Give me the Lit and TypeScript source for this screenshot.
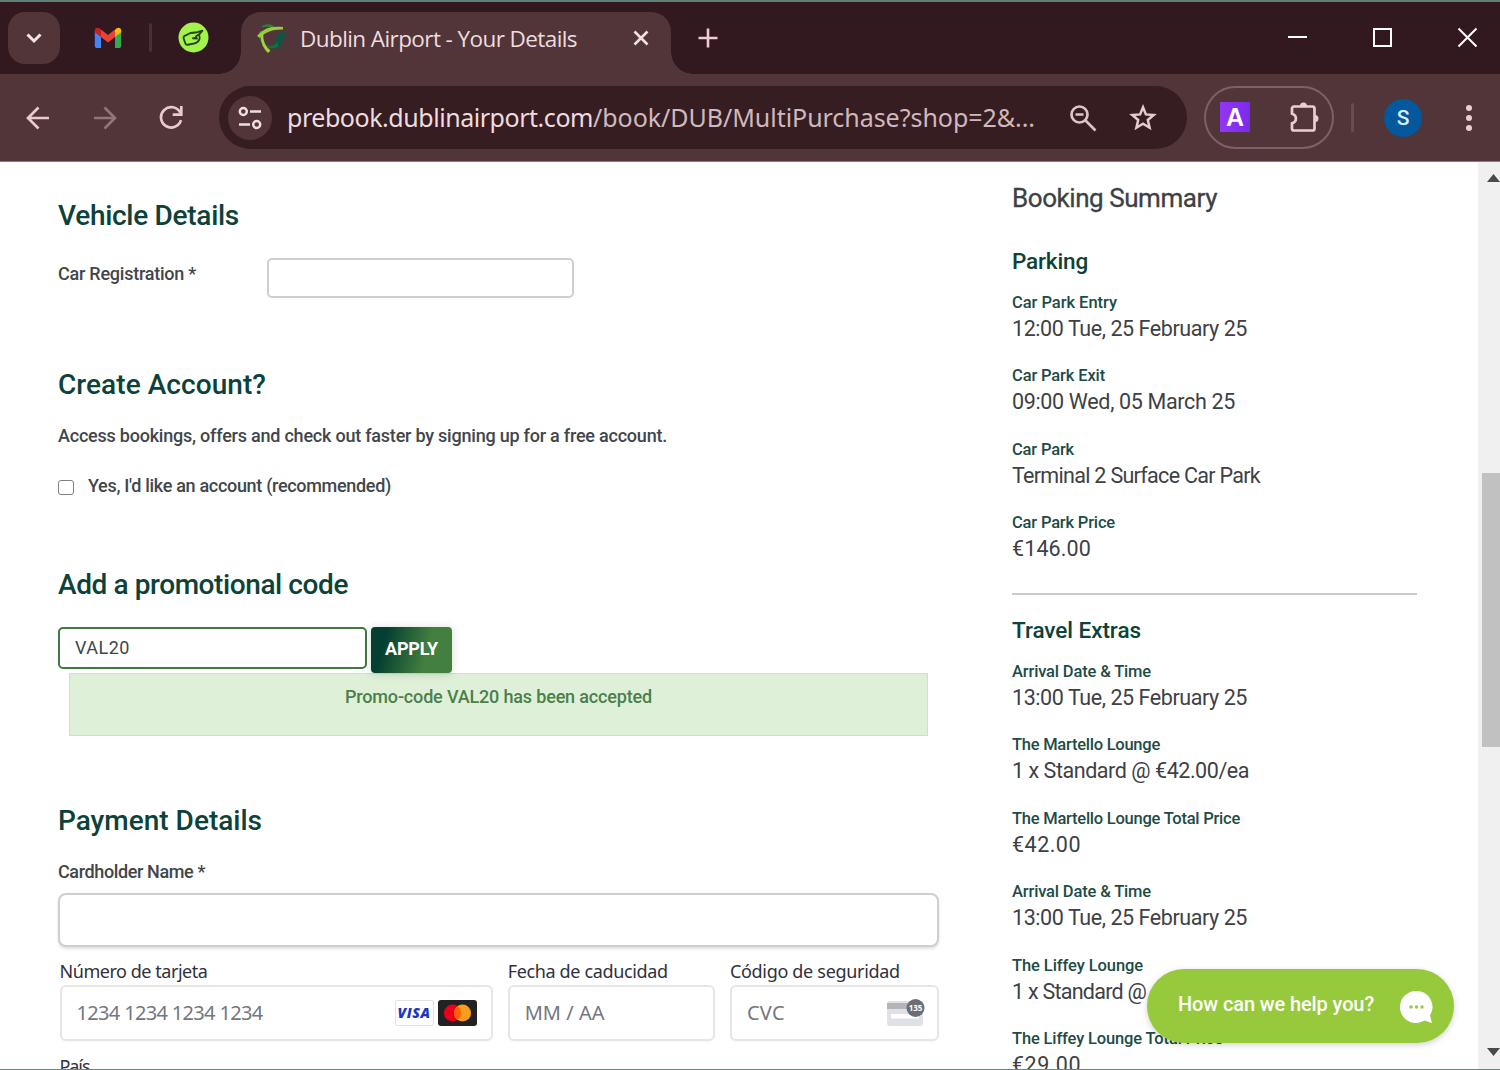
import { LitElement, html, css, svg } from "lit";
import { customElement, property, state } from "lit/decorators.js";

/** A single line of text whose tracking is set so that it spans a given width. */
@customElement("text-run")
class TextRun extends LitElement {
  static styles = css`
    :host { display: inline-block; white-space: pre; }
  `;
  @property() text = "";
  @property({ type: Number }) span = 0;
  @state() tracking = 0;

  firstUpdated() {
    const el = this.renderRoot.querySelector("span");
    if (!el || !this.span) return;
    this.tracking = (this.span - el.getBoundingClientRect().width) / this.text.length;
  }

  render() {
    return html`<span style="letter-spacing:${this.tracking}px">${this.text}</span>`;
  }
}

const run = (text: string, span: number) => html`<text-run .text=${text} .span=${span}></text-run>`;

@customElement("browser-chrome")
class BrowserChrome extends LitElement {
  static styles = css`
    :host { display: block; font-family: "Noto Sans", "Open Sans", sans-serif; color: #eedcdf; }
    svg { display: block; flex: none; }
    .strip { box-sizing: border-box; height: 74px; border-top: 2px solid #5f8076; background: #31191f; display: flex; align-items: flex-start; padding-left: 8px; }
    .search { width: 52px; height: 52px; border-radius: 17px; background: #513539; margin-top: 10px; display: grid; place-items: center; }
    .gmail { margin: 25px 0 0 34px; }
    .sep { width: 3px; height: 29px; margin: 21px 0 0 27px; background: #4b2f34; border-radius: 2px; }
    .up { margin: 20px 0 0 26px; }
    .flare { width: 22px; height: 22px; align-self: flex-end; }
    .flare.l { margin-left: 10px; background: radial-gradient(circle at 0 0, transparent 21.5px, #513539 22px); }
    .flare.r { background: radial-gradient(circle at 100% 0, transparent 21.5px, #513539 22px); }
    .tab { box-sizing: border-box; width: 430px; height: 62px; margin-top: 10px; border-radius: 20px 20px 0 0; background: #513539; display: flex; align-items: center; padding: 0 22px 10px 15px; font-family: "Open Sans", "Noto Sans", sans-serif; font-size: 22.500px; line-height: 30px; }
    .tab .title { margin: 1px 0 0 13px; flex: 1; }
    .plus { margin: 26px 0 0 5px; }
    .win { display: flex; margin: 25px 22px 0 auto; gap: 64px; }
    .bar { box-sizing: border-box; height: 88px; background: #513539; border-bottom: 1px solid #8d7a7d; display: flex; align-items: center; padding-left: 26px; }
    .fwd { margin-left: 43px; }
    .reload { margin-left: 42px; }
    .omni { box-sizing: border-box; width: 968px; height: 63px; border-radius: 32px; background: #361d22; margin-left: 35px; display: flex; align-items: center; padding: 0 29px 0 9px; font-size: 25px; line-height: 32px; }
    .info { width: 44px; height: 44px; border-radius: 50%; background: #513539; display: grid; place-items: center; }
    .url { margin-left: 15px; display: flex; flex: 1; margin-top: -1px; }
    .path { color: #cfb9bd; }
    .star { margin-left: 31px; }
    .ext { box-sizing: border-box; width: 130px; height: 63px; border: 2px solid #7b6265; border-radius: 32px; margin-left: 17px; display: flex; align-items: center; justify-content: space-between; padding: 0 11px 0 14px; }
    .a { width: 30px; height: 30px; margin-top: -1px; background: linear-gradient(90deg, #9436f5, #7a2bee); color: #fff; font: 700 25px/31px "Liberation Sans", sans-serif; text-align: center; }
    .vsep { width: 3px; height: 29px; margin-left: 17px; background: #6a4b50; border-radius: 2px; }
    .avatar { width: 38px; height: 38px; border-radius: 50%; margin-left: 30px; background: #04589d; color: #dcebf7; font: 500 21px/38px Roboto, sans-serif; text-align: center; }
    .menu { margin-left: 43px; }
  `;

  render() {
    return html`
      <div class="strip">
        <div class="search"><svg width="18" height="12" viewBox="0 0 18 12"><path d="M2.5 2.5 9 9l6.500-6.500" fill="none" stroke="#f6e4e7" stroke-width="3"/></svg></div>
        <svg class="gmail" width="28" height="22" viewBox="0 0 28 22">
          <path d="M.8 4v15a2 2 0 0 0 2 2h4.200V9z" fill="#4285f4"/>
          <path d="M27.200 4v15a2 2 0 0 1-2 2H21V9z" fill="#34a853"/>
          <path d="M21 3v7l6.200-4.800V3.400C27.200 1 24.500-.2 22.600 1.300z" fill="#fbbc04"/>
          <path d="M7 10V2.600l7 5.300 7-5.300V10l-7 5.400z" fill="#ea4335"/>
          <path d="M.8 3.400v1.800L7 10V2.600L5.400 1.300C3.500-.2.8 1 .8 3.400z" fill="#c5221f"/>
        </svg>
        <div class="sep"></div>
        <svg class="up" width="31" height="31" viewBox="0 0 31 31">
          <circle cx="15.500" cy="15.500" r="15" fill="#a3f34c"/>
          <path d="M12.500 11 6.200 14.200c-.8.500-.9 1.200-.6 2l1.700 5c.4 1.200 1.200 1.700 2.500 1.500l6.200-1.200c2.600-.6 5-2.500 5.600-5 .3-1.400 0-2.600-.8-3.700l3.600-4.200-5 1.600-6.900.8zM12.500 11l3.800-.3M15 16.200c1.700.4 3-.4 3.400-2.200l2.400-1.500M15 16.200l4 .3" fill="none" stroke="#24480f" stroke-width="1.900" stroke-linejoin="round" stroke-linecap="round"/>
        </svg>
        <div class="flare l"></div>
        <div class="tab">
          <svg width="31" height="31" viewBox="0 0 31 31">
            <path d="M6 3c5-2.500 9-2.500 13 1l-2 1.500C13 3.500 10 3.500 6 4.500z" fill="#2f7f3b"/>
            <path d="M4 8c-2 3-2 6 0 9l4 6 1.500-2L6 15c-1-3 0-5 1-7z" fill="#2b7d3d"/>
            <path d="M1 13C7 5.500 15 2.500 27 4v2.500C17 6 9 9 4 15z" fill="#9acb3b"/>
            <path d="M7.500 10c-1 7 1.500 13 7 17.500L12 30C6 24 4 17 5.500 11z" fill="#a5d23c"/>
            <path d="M21 11l8.500-2.500C29 16 26 22 21 26.500l-5-4.500c4-2.500 5-6 5-11z" fill="#0c5646"/>
            <path d="M11 22c4 1.500 8 .5 10.500-3l1 4c-3 3-7 3-11 1.500z" fill="#1a6a3f"/>
          </svg>
          <div class="title">${run("Dublin Airport - Your Details", 277)}</div>
          <svg width="16" height="16" viewBox="0 0 16 16"><path d="M1.500 1.500l13 13m0-13l-13 13" stroke="#f2dfe2" stroke-width="2.600"/></svg>
        </div>
        <div class="flare r"></div>
        <svg class="plus" width="20" height="20" viewBox="0 0 20 20"><path d="M10 .5v19M.5 10h19" stroke="#edcdd3" stroke-width="2.600"/></svg>
        <div class="win">
          <svg width="21" height="21" viewBox="0 0 21 21"><path d="M1 10h19" stroke="#fff" stroke-width="2"/></svg>
          <svg width="21" height="21" viewBox="0 0 21 21"><path d="M2 2h17v17H2z" fill="none" stroke="#fff" stroke-width="2"/></svg>
          <svg width="21" height="21" viewBox="0 0 21 21"><path d="M1.500 1.500l18 18m0-18l-18 18" stroke="#fff" stroke-width="2"/></svg>
        </div>
      </div>
      <div class="bar">
        <svg width="24" height="24" viewBox="0 0 24 24"><path d="M23 12H2.500M12.500 1.500 2 12l10.500 10.500" fill="none" stroke="#ebc9cf" stroke-width="2.700"/></svg>
        <svg class="fwd" width="24" height="24" viewBox="0 0 24 24"><path d="M1 12h20.500M11.500 1.500 22 12 11.500 22.500" fill="none" stroke="#92747a" stroke-width="2.700"/></svg>
        <svg class="reload" width="25" height="25" viewBox="0 0 25 25"><path d="M22 15.200A10.200 10.200 0 1 1 21.200 7.500M22.300 1v8.700h-8.600" fill="none" stroke="#ebc9cf" stroke-width="2.700"/></svg>
        <div class="omni">
          <div class="info"><svg width="24" height="24" viewBox="0 0 24 24"><g fill="none" stroke="#f0dfe2" stroke-width="2.500"><circle cx="5.300" cy="5.500" r="3.500"/><path d="M12 5.500h11M1 18.500h11"/><circle cx="18.700" cy="18.500" r="3.500"/></g></svg></div>
          <div class="url">${run("prebook.dublinairport.com", 306)}<span class="path">${run("/book/DUB/MultiPurchase?shop=2&...", 442)}</span></div>
          <svg width="28" height="28" viewBox="0 0 28 28"><g fill="none" stroke="#dcc5c9" stroke-width="2.700"><circle cx="10.500" cy="10.500" r="8"/><path d="M16 16 26.500 26.500M6.500 10.500h8"/></g></svg>
          <svg class="star" width="30" height="30" viewBox="0 0 30 30"><path d="M15 4.300 17.900 11.400 25.700 12 19.800 17 21.600 24.700 15 20.600 8.400 24.700 10.200 17 4.300 12 12.100 11.400z" fill="none" stroke="#e3cdd1" stroke-width="2.500"/></svg>
        </div>
        <div class="ext">
          <div class="a">A</div>
          <svg width="32" height="32" viewBox="0 0 32 32"><path d="M3 6.500a2 2 0 0 1 2-2h18.500a2 2 0 0 1 2 2v20a2 2 0 0 1-2 2H5a2 2 0 0 1-2-2v-5.200c5.200-1.600 5.200-8 0-9.600z" fill="none" stroke="#edcdd3" stroke-width="2.700"/><path d="M11 4a3.500 3.500 0 0 1 7 0zM26 13a3.500 3.500 0 0 1 0 7z" fill="#edcdd3"/></svg>
        </div>
        <div class="vsep"></div>
        <div class="avatar">S</div>
        <svg class="menu" width="8" height="28" viewBox="0 0 8 28"><g fill="#edcdd3"><circle cx="4" cy="4" r="3"/><circle cx="4" cy="14" r="3"/><circle cx="4" cy="24" r="3"/></g></svg>
      </div>
    `;
  }
}

@customElement("booking-form")
class BookingForm extends LitElement {
  static styles = css`
    :host { display: block; color: #41464b; font: 500 18px/24px Roboto, sans-serif; }
    svg { display: block; }
    h2 { margin: 0; font-size: 28px; line-height: 34px; font-weight: 500; color: #0c4238; }
    .box { box-sizing: border-box; border: 2px solid #cfcfcf; border-radius: 5px; background: #fff; }
    .reg { display: flex; margin: 25px 0 69px; height: 41px; }
    .reg .lbl { width: 209px; padding-top: 4px; }
    .reg .box { width: 307px; height: 40px; }
    p { margin: 22px 0 26px; }
    .check { display: flex; align-items: center; height: 24px; gap: 14px; margin-bottom: 70px; }
    .tick { box-sizing: border-box; width: 16px; height: 15px; border: 1.500px solid #808080; border-radius: 3px; margin-top: 3px; }
    .promo { display: flex; margin-top: 25px; height: 46px; gap: 4px; }
    .code { box-sizing: border-box; width: 309px; height: 42px; border: 2px solid #40793f; border-radius: 5px; padding: 7px 15px; font-weight: 400; }
    .apply { width: 81px; height: 46px; border-radius: 4px; background: linear-gradient(105deg, #053f31 18%, #43803f 68%); box-shadow: 0 1px 8px rgba(0,0,0,.16); color: #fff; font: 700 18px/43px Roboto, sans-serif; text-align: center; }
    .ok { box-sizing: border-box; width: 859px; height: 63px; margin: 0 0 68px 11px; border: 1px solid #cbe5b9; background: #dff0d8; color: #4b7f4c; text-align: center; padding-top: 11px; }
    .name { margin-top: 22px; }
    .holder { width: 881px; height: 54px; margin-top: 9px; border-radius: 8px; box-shadow: 0 2px 3px rgba(0,0,0,.12); }
    .card { display: grid; grid-template-columns: 433px 207px 209px; column-gap: 15.200px; margin: 12px 0 0 1.500px; font: 400 18px/24px "Noto Sans", "Open Sans", sans-serif; color: #30313d; }
    .field { box-sizing: border-box; height: 56px; margin-top: 2px; border: 2px solid #e6e6e6; border-radius: 6px; box-shadow: 0 1px 2px rgba(0,0,0,.04); display: flex; align-items: center; padding: 0 14px 0 15px; font-size: 20px; color: #757680; }
    .field svg { margin-left: auto; }
    .visa { box-sizing: border-box; width: 39px; height: 26px; border: 1px solid #e2e2e6; border-radius: 2px; margin-left: auto; color: #1a36c4; font: italic 800 14px/24px "Open Sans", sans-serif; text-align: center; }
    .visa + svg { margin-left: 4px; }
    .cvc { padding-right: 12px; }
    .country { margin-top: 13px; }
    .digits { font: 700 8px "Open Sans", sans-serif; fill: #fff; }
  `;

  render() {
    return html`
      <h2>${run("Vehicle Details", 181)}</h2>
      <div class="reg"><div class="lbl">${run("Car Registration *", 138)}</div><div class="box"></div></div>
      <h2>${run("Create Account?", 208)}</h2>
      <p>${run("Access bookings, offers and check out faster by signing up for a free account.", 609)}</p>
      <div class="check"><div class="tick"></div>${run("Yes, I'd like an account (recommended)", 303)}</div>
      <h2>${run("Add a promotional code", 290)}</h2>
      <div class="promo">
        <div class="code">${run("VAL20", 55)}</div>
        <div class="apply">${run("APPLY", 53)}</div>
      </div>
      <div class="ok">${run("Promo-code VAL20 has been accepted", 307)}</div>
      <h2>${run("Payment Details", 204)}</h2>
      <div class="name">${run("Cardholder Name *", 147)}</div>
      <div class="box holder"></div>
      <div class="card">
        <div>${run("Número de tarjeta", 148)}
          <div class="field">${run("1234 1234 1234 1234", 186)}
            <div class="visa">${run("VISA", 33)}</div>
            <svg width="39" height="26" viewBox="0 0 39 26"><rect width="39" height="26" rx="3" fill="#222"/><circle cx="14.500" cy="13" r="8.500" fill="#eb001b"/><circle cx="24.500" cy="13" r="8.500" fill="#f79e1b"/><path d="M19.500 6.130a8.500 8.500 0 0 1 0 13.740 8.500 8.500 0 0 1 0-13.740z" fill="#ff5f00"/></svg>
          </div>
        </div>
        <div>${run("Fecha de caducidad", 160)}<div class="field">${run("MM / AA", 80)}</div></div>
        <div>${run("Código de seguridad", 170)}
          <div class="field cvc">${run("CVC", 38)}
            <svg width="38" height="28" viewBox="0 0 38 28">${svg`<rect x="0" y="2" width="36" height="25" rx="3" fill="#e0e1e4"/><rect y="4" width="36" height="6" fill="#b4b5b9"/><rect x="4" y="15" width="28" height="4.500" fill="#fff"/><circle cx="28.500" cy="9" r="9" fill="#6c6e77"/><text class="digits" x="28.500" y="12" text-anchor="middle">135</text>`}</svg>
          </div>
        </div>
        <div class="country">${run("País", 30)}</div>
      </div>
    `;
  }
}

type Line = [label: string, labelSpan: number, value: string, valueSpan: number];

const PARKING: Line[] = [
  ["Car Park Entry", 105, "12:00 Tue, 25 February 25", 235],
  ["Car Park Exit", 93, "09:00 Wed, 05 March 25", 223],
  ["Car Park", 62, "Terminal 2 Surface Car Park", 248],
  ["Car Park Price", 103, "€146.00", 79],
];

const EXTRAS: Line[] = [
  ["Arrival Date & Time", 139, "13:00 Tue, 25 February 25", 235],
  ["The Martello Lounge", 148, "1 x Standard @ €42.00/ea", 237],
  ["The Martello Lounge Total Price", 228, "€42.00", 69],
  ["Arrival Date & Time", 139, "13:00 Tue, 25 February 25", 235],
  ["The Liffey Lounge", 131, "1 x Standard @ €29.00/ea", 230],
  ["The Liffey Lounge Total Price", 211, "€29.00", 69],
];

@customElement("booking-summary")
class BookingSummary extends LitElement {
  static styles = css`
    :host { display: block; width: 405px; font-family: Roboto, sans-serif; color: #3d4145; }
    h2 { margin: 0; font-size: 26px; line-height: 32px; font-weight: 400; -webkit-text-stroke: .3px; }
    h3 { margin: 0; font-size: 22.500px; line-height: 28px; font-weight: 500; color: #0c4238; }
    .parking { margin-top: 33px; }
    .item { height: 73.500px; font-size: 21.500px; line-height: 26px; }
    .label { font-size: 16.500px; line-height: 26px; font-weight: 500; color: #1d4c45; }
    .list { padding-top: 14.600px; }
    .rule { border-top: 2px solid #cbcbcb; margin: 9.400px 0 21px; }
  `;

  list(lines: Line[]) {
    return html`<div class="list">${lines.map(
      ([label, ls, value, vs]) => html`<div class="item"><div class="label">${run(label, ls)}</div><div>${run(value, vs)}</div></div>`
    )}</div>`;
  }

  render() {
    return html`
      <h2>${run("Booking Summary", 205)}</h2>
      <h3 class="parking">${run("Parking", 76)}</h3>
      ${this.list(PARKING)}
      <div class="rule"></div>
      <h3>${run("Travel Extras", 129)}</h3>
      ${this.list(EXTRAS)}
    `;
  }
}

@customElement("app-root")
class AppRoot extends LitElement {
  static styles = css`
    :host { display: block; position: relative; width: 1500px; height: 1070px; overflow: hidden; background: #fff; }
    .page { box-sizing: border-box; height: 907px; display: flex; overflow: hidden; }
    .form { width: 882px; padding: 37px 72px 0 58px; flex: none; }
    .side { width: 466px; padding-top: 20px; flex: none; }
    .scroll { width: 22px; background: #f0f0f0; display: flex; flex-direction: column; align-items: flex-end; flex: none; }
    .scroll svg { display: block; margin-top: 12px; }
    .thumb { width: 18px; height: 274px; background: #c1c1c1; margin: 291px 0 289px; flex: none; }
    .edge { height: 1px; background: #6c857e; }
    .chat { position: absolute; left: 1147px; top: 969px; box-sizing: border-box; width: 307px; height: 74px; border-radius: 37px; background: #97c93d; box-shadow: 0 2px 6px rgba(0,0,0,.18); display: flex; align-items: center; justify-content: space-between; padding: 0 20px 0 31px; color: #fff; font: 500 20px/28px Roboto, sans-serif; }
    .chat text-run { margin-top: -4px; }
    .chat svg { margin-top: 2px; }
  `;

  render() {
    return html`
      <browser-chrome></browser-chrome>
      <div class="page">
        <div class="form"><booking-form></booking-form></div>
        <div class="side"><booking-summary></booking-summary></div>
        <div class="scroll">
          <svg width="13" height="8" viewBox="0 0 13 8"><path d="M0 8 6.500 0 13 8z" fill="#4a4a4a"/></svg>
          <div class="thumb"></div>
          <svg width="13" height="8" viewBox="0 0 13 8"><path d="M0 0h13L6.500 8z" fill="#4a4a4a"/></svg>
        </div>
      </div>
      <div class="edge"></div>
      <div class="chat">
        ${run("How can we help you?", 196)}
        <svg width="34" height="34" viewBox="0 0 34 34"><path d="M16.500 1a16 16 0 1 0 8 29.500L32 33l-2-7.500A16 16 0 0 0 16.500 1z" fill="#fff"/><g fill="#97c93d"><circle cx="11" cy="17" r="1.700"/><circle cx="16.500" cy="17" r="1.700"/><circle cx="22" cy="17" r="1.700"/></g></svg>
      </div>
    `;
  }
}
